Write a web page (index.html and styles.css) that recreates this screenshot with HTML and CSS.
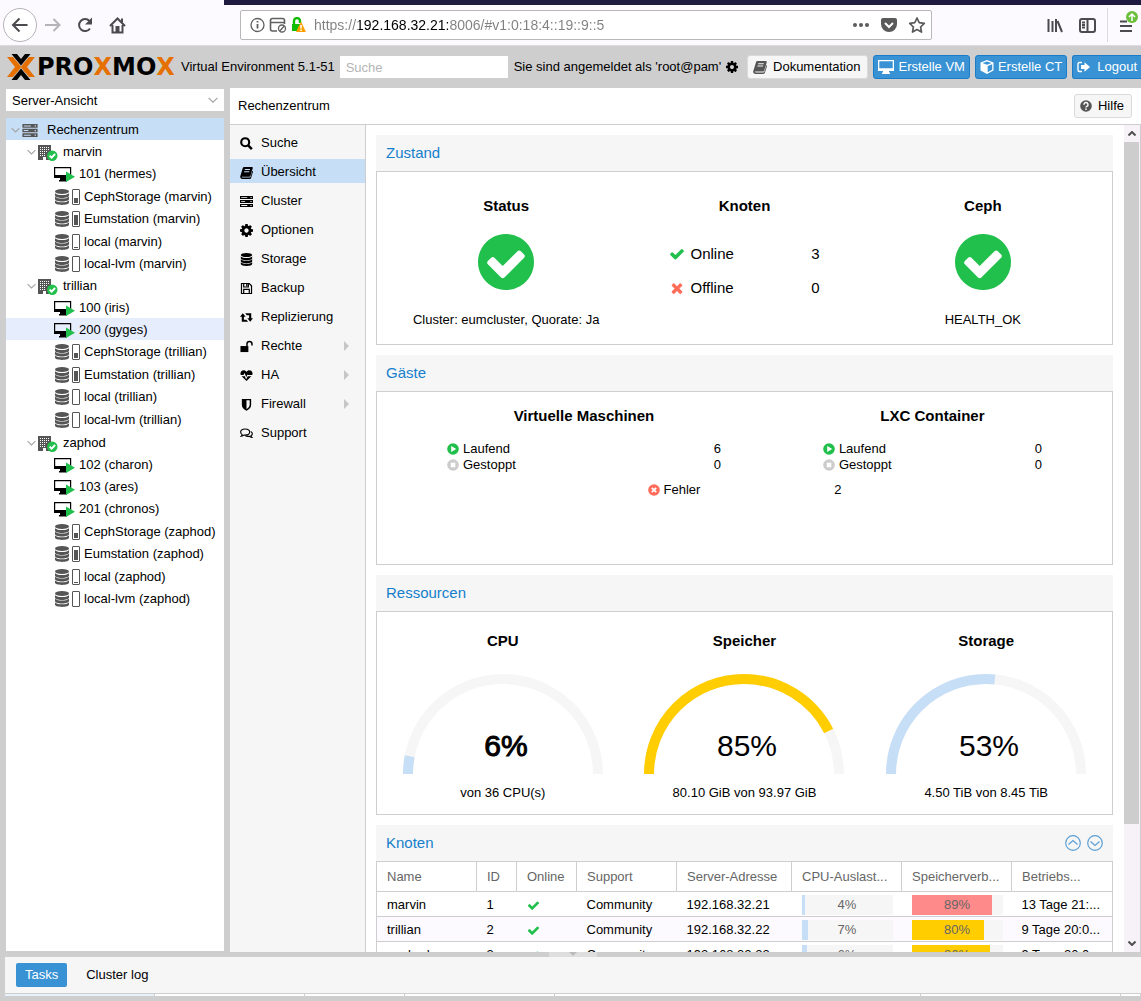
FILE: index.html
```html
<!DOCTYPE html>
<html lang="de">
<head>
<meta charset="UTF-8" />
<meta name="viewport" content="width=device-width, initial-scale=1" />
<title>Proxmox Virtual Environment</title>
<link rel="stylesheet" href="styles.css">
</head>
<body>

<!-- shared icons -->
<svg class="sprite" aria-hidden="true">
  <symbol id="i-check-circle" viewBox="128 128 1536 1536"><path d="M1412 734q0-28-18-46l-91-90q-19-19-45-19t-45 19l-408 407-226-226q-19-19-45-19t-45 19l-91 90q-18 18-18 46 0 27 18 45l362 362q19 19 45 19 27 0 46-19l543-543q18-18 18-45zm252 162q0 209-103 385.5t-279.5 279.5-385.5 103-385.5-103-279.5-279.5-103-385.5 103-385.5 279.5-279.5 385.5-103 385.5 103 279.5 279.5 103 385.5z"/></symbol>
  <symbol id="i-check" viewBox="0 0 1792 1792"><path d="M1671 566q0 40-28 68l-724 724-136 136q-28 28-68 28t-68-28l-136-136-362-362q-28-28-28-68t28-68l136-136q28-28 68-28t68 28l294 295 656-657q28-28 68-28t68 28l136 136q28 28 28 68z"/></symbol>
  <symbol id="i-times" viewBox="0 0 1792 1792"><path d="M1490 1322q0 40-28 68l-136 136q-28 28-68 28t-68-28l-294-294-294 294q-28 28-68 28t-68-28l-136-136q-28-28-28-68t28-68l294-294-294-294q-28-28-28-68t28-68l136-136q28-28 68-28t68 28l294 294 294-294q28-28 68-28t68 28l136 136q28 28 28 68t-28 68l-294 294 294 294q28 28 28 68z"/></symbol>
  <symbol id="i-cog" viewBox="128 128 1536 1536"><path d="M1152 896q0-106-75-181t-181-75-181 75-75 181 75 181 181 75 181-75 75-181zm512-109v222q0 12-8 23t-20 13l-185 28q-19 54-39 91 35 50 107 138 10 12 10 25t-9 23q-27 37-99 108t-94 71q-12 0-26-9l-138-108q-44 23-91 38-16 136-29 186-7 28-36 28h-222q-14 0-24.5-8.5t-11.5-21.5l-28-184q-49-16-90-37l-141 107q-10 9-25 9-14 0-25-11-126-114-165-168-7-10-7-23 0-12 8-23 15-21 51-66.5t54-70.5q-27-50-41-99l-183-27q-13-2-21-12.5t-8-23.5v-222q0-12 8-23t19-13l186-28q14-46 39-92-40-57-107-138-10-12-10-24 0-10 9-23 26-36 98.5-107.5t94.5-71.5q13 0 26 10l138 107q44-23 91-38 16-136 29-186 7-28 36-28h222q14 0 24.5 8.5t11.5 21.5l28 184q49 16 90 37l142-107q9-9 24-9 13 0 25 10 129 119 165 170 7 8 7 22 0 12-8 23-15 21-51 66.5t-54 70.5q26 50 41 98l183 28q13 2 21 12.5t8 23.5z"/></symbol>
  <symbol id="i-book" viewBox="0 0 14 14"><path fill-rule="evenodd" d="M4.6 1h8c.9 0 1.4.7 1.1 1.5l-2.4 7.9c-.2.7-.8 1.1-1.5 1.1H2.6c-.4 0-.6.2-.5.5s.4.5.8.5h7.5c.5 0 .8-.3 1-.8l2-6.6c.6.3.7.8.5 1.4l-2 6.3c-.2.7-.8 1.2-1.5 1.2H2.5C1 14-.2 12.500.3 11L3 2.200C3.200 1.500 3.900 1 4.600 1zM5.300 3.300l-.3 1h5.600l.3-1zM4.600 5.600l-.3 1h5.600l.3-1z"/></symbol>
  <symbol id="i-server" viewBox="0 0 14 12"><path fill-rule="evenodd" d="M0 0h14v3.400H0zM0 4.300h14v3.400H0zM0 8.600h14V12H0zM1.300 1.300v.9h6.500v-.9zM1.300 5.600v.9h4.200v-.9zM1.300 9.900v.9h6.500v-.9zM11.300 1.200v1.100h1.200V1.200zM11.300 5.500v1.100h1.200V5.500zM11.300 9.800v1.100h1.200V9.800z"/></symbol>
  <symbol id="i-db" viewBox="0 0 14 16"><ellipse cx="7" cy="2.500" rx="7" ry="2.500"/><path d="M0 4.200c1.500 1.300 4 1.800 7 1.800s5.500-.5 7-1.800V6.400C14 7.800 11 8.900 7 8.900S0 7.800 0 6.400zM0 7.800c1.500 1.300 4 1.800 7 1.800s5.500-.5 7-1.800V10c0 1.400-3 2.500-7 2.500S0 11.400 0 10zM0 11.400c1.500 1.300 4 1.800 7 1.800s5.500-.5 7-1.800v2.200C14 15 11 16 7 16s-7-1-7-2.400z"/></symbol>
  <symbol id="i-node" viewBox="0 0 20 17"><path fill="#555" d="M0 1h13v15H0z"/><g fill="#fff"><path d="M2 3h1v1H2zM4 3h1v1H4zM6 3h1v1H6zM8 3h1v1H8zM10 3h1v1h-1zM2 5h1v1H2zM4 5h1v1H4zM6 5h1v1H6zM8 5h1v1H8zM10 5h1v1h-1zM2 7h1v1H2zM4 7h1v1H4zM6 7h1v1H6zM8 7h1v1H8zM2 9h1v1H2zM4 9h1v1H4zM6 9h1v1H6zM2 11h1v1H2zM4 11h1v1H4zM6 11h1v1H6zM5 13h3v3H5z"/></g><circle cx="14.300" cy="11.700" r="5.200" fill="#21bf4b"/><path d="M11.600 11.700l2 2 3.500-3.700" fill="none" stroke="#fff" stroke-width="1.900"/></symbol>
  <symbol id="i-vm" viewBox="0 0 21 16"><path fill="none" stroke="#000" stroke-width="1.200" d="M.6 1.600h16v9H.6z"/><path d="M0 9h17v3H0zM6 12h6v2.500H6zM5 14h8v1.500H5z"/><path fill="#21bf4b" d="M12 5.500l9 5.200-9 5.300z"/></symbol>
  <symbol id="i-down" viewBox="0 0 10 6"><path fill="none" stroke="#a5a5a5" stroke-width="1.200" d="M.6.8L5 5.200 9.400.8"/></symbol>
  <symbol id="i-search" viewBox="0 0 14 14"><circle cx="5.600" cy="5.600" r="4.300" fill="none" stroke="#000" stroke-width="2.300"/><path d="M8.500 8.700l4.300 4.300" stroke="#000" stroke-width="2.700"/></symbol>
  <symbol id="i-save" viewBox="0 0 14 14"><path fill="none" stroke="#000" stroke-width="1.300" d="M1.600 1.600h8.400l2.400 2.400v8.400H1.600zM4 12V8h6v4M4 2v3.400h5V2M7.300 2v2.500"/></symbol>
  <symbol id="i-retweet" viewBox="0 0 14 14"><path d="M3 2.500L0 6.300h1.900V11.500h6.800L6.900 9.500H4.200V6.300h1.900zM5.500 2.500l1.800 2h2.500v3.200H7.900L11 11.500l3-3.800h-1.900V2.500z"/></symbol>
  <symbol id="i-unlock" viewBox="0 0 14 14"><path d="M.5 6.500H9V13H.5z"/><path fill="none" stroke="#000" stroke-width="1.600" d="M7.500 7V4.300a2.700 2.700 0 0 1 5.400 0V6"/></symbol>
  <symbol id="i-heart" viewBox="0 0 14 14"><path d="M7 3C5.800 1 3.500.8 1.900 2 .6 3.100.1 5 .8 6.500h3L5 4.300l1.700 4.600 1.300-3 .5.600h4.700c.7-1.500.2-3.400-1.100-4.500C10.500.8 8.200 1 7 3zM1.700 7.700L7 13l5.300-5.300H8.300l-1.700 3.600L4.900 7.200l-.4.500z"/></symbol>
  <symbol id="i-shield" viewBox="0 0 14 14"><path fill-rule="evenodd" d="M2 1h10v6.500c0 3-2.500 5-5 6.200C4.500 12.500 2 10.500 2 7.500zM7 2.500v9.400c1.800-1 3.400-2.500 3.400-4.600V2.500z"/></symbol>
  <symbol id="i-comments" viewBox="0 0 14 14"><path fill="none" stroke="#000" stroke-width="1.200" d="M5.600 2.200c2.700 0 4.800 1.400 4.800 3.300s-2.100 3.300-4.800 3.300c-.5 0-1 0-1.500-.1-.8.7-1.600 1-2.700 1.200.5-.5.800-1 .9-1.700C1.300 7.600.7 6.600.7 5.500c0-1.900 2.200-3.300 4.900-3.300zM11.500 4.800c1.100.6 1.800 1.400 1.800 2.400 0 .9-.6 1.700-1.500 2.300.1.700.5 1.200 1 1.700-1.200-.1-2.100-.5-2.900-1.200-1.500.3-3 .1-4-.5"/></symbol>
  <symbol id="i-play" viewBox="0 0 12 12"><circle cx="6" cy="6" r="5.800" fill="#21bf4b"/><path fill="#fff" d="M4.200 3l5 3-5 3z"/></symbol>
  <symbol id="i-stop" viewBox="0 0 12 12"><circle cx="6" cy="6" r="5.800" fill="#ccc"/><path fill="#fff" d="M3.700 3.700h4.600v4.600H3.700z"/></symbol>
  <symbol id="i-error" viewBox="0 0 12 12"><circle cx="6" cy="6" r="5.800" fill="#ff6c59"/><path stroke="#fff" stroke-width="1.800" d="M3.800 3.800l4.400 4.400M8.200 3.800L3.800 8.200"/></symbol>
</svg>

<div class="browser">
  <div class="nav">
    <button class="nav-btn back" aria-label="Zurück"><svg width="18" height="16" viewBox="0 0 18 16"><path d="M16.500 8H2M8.500 1.500L2 8l6.500 6.500"/></svg></button>
    <button class="nav-btn forward" aria-label="Vor"><svg width="16" height="14" viewBox="0 0 16 14"><path d="M0 7h14.500M8.500 1l6 6-6 6"/></svg></button>
    <button class="nav-btn" aria-label="Neu laden"><svg width="16" height="16" viewBox="0 0 16 16"><path d="M13 11.500A6 6 0 1 1 12.500 4"/><path class="solid" d="M15 .5v7H8z"/></svg></button>
    <button class="nav-btn" aria-label="Startseite"><svg width="17" height="17" viewBox="0 0 17 17"><path d="M1 9l7.500-7.500L16 9M3.500 8v7.500h10V8M13 1.500v4"/><path class="solid" d="M6.500 9h4v6.500h-4z"/></svg></button>
  </div>
  <div class="right">
    <div class="tabstrip"></div>
    <div class="url-row">
      <div class="urlbar">
        <svg width="56" height="16" viewBox="0 0 56 16"><g fill="none" stroke="#606060" stroke-width="1.300"><circle cx="7.500" cy="8" r="6.500"/><path d="M7.500 7v4.500M7.500 4v1.600" stroke-width="1.800"/><path d="M27 14h-4.500a2 2 0 0 1-2-2V3.500a2 2 0 0 1 2-2h10a2 2 0 0 1 2 2V7M20.500 5.500h14" stroke-width="1.600"/><circle cx="32" cy="11.500" r="3.500"/><path d="M29.700 14l4.600-5"/></g><path fill="none" stroke="#12bc00" stroke-width="2.400" d="M44 8V4a3 3 0 0 1 6 0v2"/><path fill="#12bc00" d="M42 7h8v7h-8z"/><path fill="#ffa000" d="M51 4.500l5 10.500H46z"/><path stroke="#fff" stroke-width="1.500" d="M51 8v3.500M51 12.500V14"/></svg>
        <input class="url" type="text" aria-label="Adresse" value="https://192.168.32.21:8006/#v1:0:18:4::19::9::5">
        <svg width="74" height="18" viewBox="0 0 74 18"><g fill="#5a5a5a"><circle cx="3" cy="9" r="2"/><circle cx="9" cy="9" r="2"/><circle cx="15" cy="9" r="2"/><path d="M31 2h12a2 2 0 0 1 2 2v4a8 8 0 0 1-16 0V4a2 2 0 0 1 2-2z"/></g><path fill="none" stroke="#fff" stroke-width="2" d="M33 7l4 4 4-4"/><path fill="none" stroke="#5a5a5a" stroke-width="1.700" stroke-linejoin="round" d="M65 2l2.200 4.700 5.100.7-3.700 3.600.9 5.100L65 13.600l-4.500 2.500.9-5.100-3.700-3.600 5.100-.7z"/></svg>
      </div>
      <div class="tools">
        <button class="nav-btn" aria-label="Bibliothek"><svg width="16" height="16" viewBox="0 0 16 16"><path d="M1.500 2v13M5.500 4v11M9 2v13M10.500 4l4.500 11"/></svg></button>
        <button class="nav-btn" aria-label="Seitenleiste"><svg width="17" height="15" viewBox="0 0 17 15"><path d="M3 1h11a2 2 0 0 1 2 2v9a2 2 0 0 1-2 2H3a2 2 0 0 1-2-2V3a2 2 0 0 1 2-2zM8.500 1v13" stroke-width="1.700"/><path d="M3 4.500h3M3 7h3M3 9.500h3" stroke-width="1"/></svg></button>
        <button class="nav-btn menu" aria-label="Menü"><svg width="18" height="24" viewBox="0 0 18 24"><path d="M0 11.500h7M0 16h12M0 21h12"/><circle cx="12" cy="7" r="6" fill="#6bbf3b" stroke="none"/><path d="M12 11V5M9 7l3-3 3 3" style="stroke:#fff;stroke-width:1.500"/></svg></button>
      </div>
    </div>
  </div>
</div>

<header class="header">
  <div class="logo">
    <svg width="28" height="26" viewBox="0 0 28 26"><path fill="#e57000" d="M0 3h6l8.500 10L6 23H0l8-10zM28 3h-6l-8.500 10L22 23h6l-8-10z"/><path d="M4.500 0H10l4 5 4-5h5.500L14 11.500zM4.500 26H10l4-5 4 5h5.500L14 14.500z"/></svg>
    <span>PRO<b>X</b>MO<b>X</b></span>
  </div>
  <span class="version">Virtual Environment 5.1-51</span>
  <input class="search" type="text" placeholder="Suche" aria-label="Suche">
  <span class="user">Sie sind angemeldet als 'root@pam'</span>
  <svg width="12" height="12"><use href="#i-cog"/></svg>
  <div class="actions">
    <button class="btn"><svg width="14" height="14"><use href="#i-book"/></svg>Dokumentation</button>
    <button class="btn blue"><svg width="16" height="14" viewBox="0 0 16 14"><path fill-rule="evenodd" d="M0 0h16v11H0zM1.300 1.300v6.900h13.400V1.300zM5 11h6v1.500h1V14H4v-1.500h1z"/></svg>Erstelle VM</button>
    <button class="btn blue"><svg width="14" height="14" viewBox="0 0 14 14"><path fill-rule="evenodd" d="M7 0l6.500 2.600v8L7 14 .5 10.600v-8zM7 1.400L2.500 3.100 7 4.800l4.500-1.700zM7.700 6v6.200l4.500-2.400V4.300z"/></svg>Erstelle CT</button>
    <button class="btn blue last"><svg width="14" height="14" viewBox="0 0 14 14"><path fill="none" stroke="#fff" stroke-width="1.400" d="M5 2.500H2.500a1.500 1.500 0 0 0-1.500 1.500v6a1.500 1.500 0 0 0 1.500 1.500H5"/><path d="M7.500 2.200L13 7l-5.500 4.800V9H4V5h3.500z"/></svg>Logout</button>
  </div>
</header>

<main class="main">
  <aside class="sidebar">
    <div class="view-select">
      <select aria-label="Ansicht"><option>Server-Ansicht</option></select>
      <svg width="10" height="6"><use href="#i-down"/></svg>
    </div>
    <div class="tree">
      <div class="row root"><svg class="exp"><use href="#i-down"/></svg><svg class="dc"><use href="#i-server"/></svg>Rechenzentrum</div>
      <div class="group">
        <div class="row node"><svg class="exp"><use href="#i-down"/></svg><svg class="host"><use href="#i-node"/></svg>marvin</div>
        <div class="row vm"><svg><use href="#i-vm"/></svg>101 (hermes)</div>
        <div class="row storage"><svg><use href="#i-db"/></svg><i class="usage"><i style="height:40%"></i></i>CephStorage (marvin)</div>
        <div class="row storage"><svg><use href="#i-db"/></svg><i class="usage"><i style="height:80%"></i></i>Eumstation (marvin)</div>
        <div class="row storage"><svg><use href="#i-db"/></svg><i class="usage"><i style="height:8%"></i></i>local (marvin)</div>
        <div class="row storage"><svg><use href="#i-db"/></svg><i class="usage"></i>local-lvm (marvin)</div>
      </div>
      <div class="group">
        <div class="row node"><svg class="exp"><use href="#i-down"/></svg><svg class="host"><use href="#i-node"/></svg>trillian</div>
        <div class="row vm"><svg><use href="#i-vm"/></svg>100 (iris)</div>
        <div class="row vm hover"><svg><use href="#i-vm"/></svg>200 (gyges)</div>
        <div class="row storage"><svg><use href="#i-db"/></svg><i class="usage"><i style="height:40%"></i></i>CephStorage (trillian)</div>
        <div class="row storage"><svg><use href="#i-db"/></svg><i class="usage"><i style="height:80%"></i></i>Eumstation (trillian)</div>
        <div class="row storage"><svg><use href="#i-db"/></svg><i class="usage"></i>local (trillian)</div>
        <div class="row storage"><svg><use href="#i-db"/></svg><i class="usage"></i>local-lvm (trillian)</div>
      </div>
      <div class="group">
        <div class="row node"><svg class="exp"><use href="#i-down"/></svg><svg class="host"><use href="#i-node"/></svg>zaphod</div>
        <div class="row vm"><svg><use href="#i-vm"/></svg>102 (charon)</div>
        <div class="row vm"><svg><use href="#i-vm"/></svg>103 (ares)</div>
        <div class="row vm"><svg><use href="#i-vm"/></svg>201 (chronos)</div>
        <div class="row storage"><svg><use href="#i-db"/></svg><i class="usage"><i style="height:40%"></i></i>CephStorage (zaphod)</div>
        <div class="row storage"><svg><use href="#i-db"/></svg><i class="usage"><i style="height:80%"></i></i>Eumstation (zaphod)</div>
        <div class="row storage"><svg><use href="#i-db"/></svg><i class="usage"><i style="height:8%"></i></i>local (zaphod)</div>
        <div class="row storage"><svg><use href="#i-db"/></svg><i class="usage"></i>local-lvm (zaphod)</div>
      </div>
    </div>
  </aside>

  <section class="workspace">
    <div class="title-bar">
      <span>Rechenzentrum</span>
      <button class="btn"><svg width="12" height="12" viewBox="0 0 12 12"><circle cx="6" cy="6" r="5.800"/><path fill="none" stroke="#fff" stroke-width="1.500" d="M4 4.700a2 2 0 1 1 2.800 1.700Q6 6.700 6 7.500M6 8.400v1.500"/></svg>Hilfe</button>
    </div>
    <div class="columns">
      <nav class="menu-list">
        <a href="#"><svg><use href="#i-search"/></svg>Suche</a>
        <a href="#" class="active"><svg><use href="#i-book"/></svg>Übersicht</a>
        <a href="#"><svg><use href="#i-server"/></svg>Cluster</a>
        <a href="#"><svg><use href="#i-cog"/></svg>Optionen</a>
        <a href="#"><svg><use href="#i-db"/></svg>Storage</a>
        <a href="#"><svg><use href="#i-save"/></svg>Backup</a>
        <a href="#"><svg><use href="#i-retweet"/></svg>Replizierung</a>
        <a href="#" class="more"><svg><use href="#i-unlock"/></svg>Rechte</a>
        <a href="#" class="more"><svg><use href="#i-heart"/></svg>HA</a>
        <a href="#" class="more"><svg><use href="#i-shield"/></svg>Firewall</a>
        <a href="#"><svg><use href="#i-comments"/></svg>Support</a>
      </nav>

      <div class="content">
        <section class="panel">
          <h2>Zustand</h2>
          <div class="panel-body health">
            <div class="health-col">
              <h3>Status</h3>
              <svg class="big-ok"><use href="#i-check-circle"/></svg>
              <p>Cluster: eumcluster, Quorate: Ja</p>
            </div>
            <div class="health-col">
              <h3>Knoten</h3>
              <div class="nodes-state">
                <div><svg class="ok"><use href="#i-check"/></svg>Online<span>3</span></div>
                <div><svg class="bad"><use href="#i-times"/></svg>Offline<span>0</span></div>
              </div>
            </div>
            <div class="health-col">
              <h3>Ceph</h3>
              <svg class="big-ok"><use href="#i-check-circle"/></svg>
              <p>HEALTH_OK</p>
            </div>
          </div>
        </section>

        <section class="panel">
          <h2>Gäste</h2>
          <div class="panel-body guests">
            <div class="guest-cols">
              <div>
                <h3>Virtuelle Maschinen</h3>
                <div class="count"><svg><use href="#i-play"/></svg>Laufend<span>6</span></div>
                <div class="count"><svg><use href="#i-stop"/></svg>Gestoppt<span>0</span></div>
              </div>
              <div>
                <h3>LXC Container</h3>
                <div class="count"><svg><use href="#i-play"/></svg>Laufend<span>0</span></div>
                <div class="count"><svg><use href="#i-stop"/></svg>Gestoppt<span>0</span></div>
              </div>
            </div>
            <div class="count errors"><svg><use href="#i-error"/></svg>Fehler<span>2</span></div>
          </div>
        </section>

        <section class="panel">
          <h2>Ressourcen</h2>
          <div class="panel-body resources">
            <div class="gauge">
              <h3>CPU</h3>
              <svg viewBox="0 0 200 100"><path class="track" d="M5 100a95 95 0 0 1 190 0"/><path class="value" pathLength="100" stroke-dasharray="6 200" d="M5 100a95 95 0 0 1 190 0"/><text class="heavy" x="103" y="82">6%</text></svg>
              <p>von 36 CPU(s)</p>
            </div>
            <div class="gauge">
              <h3>Speicher</h3>
              <svg viewBox="0 0 200 100"><path class="track" d="M5 100a95 95 0 0 1 190 0"/><path class="value warn" pathLength="100" stroke-dasharray="85 200" d="M5 100a95 95 0 0 1 190 0"/><text x="103" y="82">85%</text></svg>
              <p>80.10 GiB von 93.97 GiB</p>
            </div>
            <div class="gauge">
              <h3>Storage</h3>
              <svg viewBox="0 0 200 100"><path class="track" d="M5 100a95 95 0 0 1 190 0"/><path class="value" pathLength="100" stroke-dasharray="53 200" d="M5 100a95 95 0 0 1 190 0"/><text x="103" y="82">53%</text></svg>
              <p>4.50 TiB von 8.45 TiB</p>
            </div>
          </div>
        </section>

        <section class="panel">
          <h2>Knoten
            <span class="panel-tools">
              <button aria-label="Hoch"><svg viewBox="0 0 16 16"><circle cx="8" cy="8" r="7.300"/><path d="M3.500 9.500L8 5.500l4.500 4"/></svg></button>
              <button aria-label="Runter"><svg viewBox="0 0 16 16"><circle cx="8" cy="8" r="7.300"/><path d="M3.500 6.500l4.500 4 4.500-4"/></svg></button>
            </span>
          </h2>
          <table class="nodes">
            <colgroup><col class="w100"><col class="w40"><col class="w60"><col class="w100"><col class="w115"><col class="w110"><col class="w110"><col></colgroup>
            <thead>
              <tr><th>Name</th><th>ID</th><th>Online</th><th>Support</th><th>Server-Adresse</th><th>CPU-Auslast...</th><th>Speicherverb...</th><th>Betriebs...</th></tr>
            </thead>
            <tbody>
              <tr><td>marvin</td><td>1</td><td><svg class="ok"><use href="#i-check"/></svg></td><td>Community</td><td>192.168.32.21</td>
                <td><div class="bar"><i style="width:4%"></i><span>4%</span></div></td><td><div class="bar crit"><i style="width:89%"></i><span>89%</span></div></td><td>13 Tage 21:...</td></tr>
              <tr><td>trillian</td><td>2</td><td><svg class="ok"><use href="#i-check"/></svg></td><td>Community</td><td>192.168.32.22</td>
                <td><div class="bar"><i style="width:7%"></i><span>7%</span></div></td><td><div class="bar warn"><i style="width:80%"></i><span>80%</span></div></td><td>9 Tage 20:0...</td></tr>
              <tr><td>zaphod</td><td>3</td><td><svg class="ok"><use href="#i-check"/></svg></td><td>Community</td><td>192.168.32.23</td>
                <td><div class="bar"><i style="width:6%"></i><span>6%</span></div></td><td><div class="bar warn"><i style="width:86%"></i><span>86%</span></div></td><td>9 Tage 20:0...</td></tr>
            </tbody>
          </table>
        </section>
      </div>

      <div class="scrollbar">
        <svg width="8" height="5" viewBox="0 0 8 5"><path d="M.5 4.500L4 1l3.500 3.500"/></svg>
        <div class="track"><div class="thumb"></div></div>
        <svg width="8" height="5" viewBox="0 0 8 5"><path d="M.5.500L4 4 7.500.500"/></svg>
      </div>
    </div>
  </section>
</main>

<div class="splitter"><i><svg width="8" height="4" viewBox="0 0 8 4"><path fill="#bbb" d="M0 0h8L4 4z"/></svg></i></div>

<footer class="log">
  <div class="tabs">
    <button class="tab active">Tasks</button>
    <button class="tab">Cluster log</button>
  </div>
  <div class="log-head"><i class="sorted"></i><i></i><i></i><i></i><i></i><i></i><i></i></div>
</footer>

</body>
</html>
```

FILE: styles.css
```css
* {
  box-sizing: border-box;
}
body {
  margin: 0;
  height: 100vh;
  display: flex;
  flex-direction: column;
  overflow: hidden;
  background: #cecece;
  color: #000;
  font: 13px/16px "Liberation Sans", Arial, sans-serif;
}
button, input, select {
  font: inherit;
  color: inherit;
}
svg {
  flex: none;
}
h2, h3, p {
  margin: 0;
}
.sprite {
  position: absolute;
  width: 0;
  height: 0;
}

/* browser bar */
.browser {
  flex: none;
  display: flex;
  height: 46px;
  background: #fdfaff;
  border-bottom: 1px solid #dcdae0;
}
.nav {
  display: flex;
  align-items: center;
  gap: 16px;
  width: 224px;
  padding: 5px 0 0 3px;
}
.nav-btn {
  display: flex;
  padding: 0;
  border: 0;
  background: none;
}
.nav-btn path {
  fill: none;
  stroke: #4a4a4f;
  stroke-width: 2;
}
.nav-btn .solid {
  fill: #4a4a4f;
  stroke: none;
}
.nav .back {
  margin-right: -8px;
  width: 34px;
  height: 34px;
  align-items: center;
  justify-content: center;
  border: 1px solid #b5b3b8;
  border-radius: 50%;
  background: #fff;
}
.nav .forward path {
  stroke: #b5b3b8;
}
.right {
  flex: 1;
  display: flex;
  flex-direction: column;
}
.tabstrip {
  height: 5px;
  background: #1f1b40;
}
.url-row {
  flex: 1;
  display: flex;
  align-items: center;
  padding-left: 16px;
}
.urlbar {
  flex: 1;
  display: flex;
  align-items: center;
  height: 30px;
  padding: 0 5px 0 9px;
  background: #fff;
  border: 1px solid #b9b7bc;
  border-radius: 2px;
}
.url {
  flex: 1;
  min-width: 0;
  padding: 0 0 0 8px;
  border: 0;
  outline: 0;
  font-size: 14px;
  color: transparent;
  background: linear-gradient(90deg, #808080 53px, #000 53px 142px, #808080 142px);
  -webkit-background-clip: text;
  background-clip: text;
}
.tools {
  display: flex;
  align-items: center;
  align-self: stretch;
  gap: 16px;
  width: 209px;
  padding-left: 115px;
}
.tools .menu {
  align-items: center;
  height: 34px;
  margin-left: -5px;
  padding: 0 0 7px 12px;
  border-left: 1px solid #dcdae0;
}

/* header */
.header {
  flex: none;
  display: flex;
  align-items: center;
  height: 42px;
  padding-left: 7px;
  white-space: nowrap;
  overflow: hidden;
}
.logo {
  flex: none;
  display: flex;
  align-items: center;
  width: 174px;
  font: bold 24px/26px "DejaVu Sans", sans-serif;
}
.logo span {
  margin-left: 2px;
}
.logo b {
  color: #e57000;
}
.search {
  flex: none;
  width: 168px;
  height: 22px;
  margin: 0 6px 0 5px;
  padding: 0 6px;
  border: 0;
  background: #fff;
}
.search::placeholder {
  color: #b5b5b5;
}
.user {
  margin-right: 5px;
}
.actions {
  display: flex;
  gap: 5px;
  margin-left: auto;
}
.btn {
  display: flex;
  align-items: center;
  gap: 6px;
  height: 24px;
  padding: 0 7px 0 5px;
  border: 1px solid #dadada;
  border-radius: 3px;
  background: #f6f6f6;
}
.btn svg {
  fill: #555;
}
.btn.blue {
  padding: 0 4px;
  gap: 4px;
  border-color: #1a7cc9;
  background: #3892d4;
  color: #fff;
}
.btn.blue svg {
  fill: #fff;
}
.btn.last {
  gap: 6px;
  border-right: 0;
  border-radius: 3px 0 0 3px;
}

/* main area */
.main {
  flex: 1;
  min-height: 0;
  display: flex;
  gap: 6px;
  padding-left: 6px;
}
.sidebar {
  flex: none;
  display: flex;
  flex-direction: column;
  gap: 7px;
  width: 218px;
  padding: 1px 0;
}
.view-select {
  position: relative;
  height: 22px;
}
.view-select select {
  width: 100%;
  height: 100%;
  padding: 1px 6px 0;
  border: 0;
  background: #fff;
  appearance: none;
}
.view-select svg {
  position: absolute;
  right: 6px;
  top: 8px;
}
.tree {
  flex: 1;
  background: #fff;
  overflow: hidden;
}
.row {
  display: flex;
  align-items: center;
  height: 22px;
  padding-top: 2px;
  white-space: nowrap;
}
.row.storage:nth-child(odd) {
  height: 23px;
}
.group:last-child {
  margin-top: 1px;
}
.row.root {
  padding-left: 5px;
  background: #c6def6;
}
.row.node {
  padding-left: 21px;
}
.row.vm {
  padding-left: 48px;
}
.row.storage {
  padding-left: 49px;
}
.row.hover {
  background: #e6edfd;
}
.exp {
  width: 9px;
  height: 6px;
  margin-right: 2px;
}
.dc {
  width: 16px;
  height: 13px;
  margin-right: 9px;
  fill: #555;
}
.host {
  width: 20px;
  height: 17px;
  margin-right: 5px;
}
.vm svg {
  width: 21px;
  height: 16px;
  margin-right: 4px;
}
.storage svg {
  width: 14px;
  height: 16px;
  fill: #555;
}
.usage {
  display: flex;
  align-items: flex-end;
  width: 8px;
  height: 16px;
  margin: 0 4px 0 3px;
  padding: 1px;
  border: 1px solid #555;
  border-radius: 1px;
}
.usage i {
  width: 100%;
  background: #555;
}

.workspace {
  flex: 1;
  min-width: 0;
  display: flex;
  flex-direction: column;
  background: #fff;
}
.title-bar {
  display: flex;
  align-items: center;
  justify-content: space-between;
  height: 37px;
  padding: 0 9px 0 8px;
  border-bottom: 1px solid #cecece;
}
.columns {
  flex: 1;
  min-height: 0;
  display: flex;
}
.menu-list {
  flex: none;
  display: flex;
  flex-direction: column;
  gap: 5px;
  width: 136px;
  padding-top: 5px;
  background: #f6f6f6;
  border-right: 1px solid #cecece;
}
.menu-list a {
  display: flex;
  align-items: center;
  gap: 8px;
  height: 24px;
  padding: 2px 16px 0 10px;
  color: #000;
  text-decoration: none;
}
.menu-list svg {
  width: 13px;
  height: 13px;
}
.menu-list .active {
  background: #c6def6;
}
.menu-list .more::after {
  content: "";
  margin-left: auto;
  border: 5px solid transparent;
  border-left-color: #c6c6c6;
  border-right: 0;
}
.content {
  flex: 1;
  min-width: 0;
  padding: 10px 11px 10px 10px;
  overflow: hidden;
}

/* panels */
.panel {
  margin-bottom: 10px;
}
.panel h2 {
  display: flex;
  align-items: center;
  justify-content: space-between;
  height: 36px;
  padding: 0 10px;
  background: #f6f6f6;
  color: #157fcc;
  font-size: 15px;
  font-weight: normal;
}
.panel-body {
  border: 1px solid #cecece;
}
.panel h3 {
  font-size: 15px;
  line-height: 18px;
  text-align: center;
}
.ok {
  fill: #21bf4b;
}
.bad {
  fill: #ff6c59;
}
.health {
  display: grid;
  grid-template-columns: repeat(3, 1fr);
  height: 174px;
  padding: 25px 10px 0;
}
.health-col {
  display: flex;
  flex-direction: column;
  align-items: center;
}
.big-ok {
  width: 56px;
  height: 56px;
  margin: 19px 0 22px;
  fill: #21bf4b;
}
.nodes-state {
  width: 150px;
  margin-top: 22px;
  font-size: 15px;
}
.nodes-state div {
  display: flex;
  align-items: center;
  gap: 5px;
  height: 34px;
}
.nodes-state svg {
  width: 16px;
  height: 16px;
}
.nodes-state span, .count span {
  margin-left: auto;
}
.guests {
  height: 174px;
  padding: 15px 70px 0;
}
.guest-cols {
  display: grid;
  grid-template-columns: 5fr 4fr;
  gap: 102px;
}
.guests h3 {
  margin-bottom: 16px;
}
.count {
  display: flex;
  align-items: center;
  gap: 4px;
}
.count svg {
  width: 12px;
  height: 12px;
}
.errors {
  width: 194px;
  margin: 9px auto 0;
}
.resources {
  display: grid;
  grid-template-columns: repeat(3, 1fr);
  height: 204px;
  padding: 20px 5px 0;
}
.gauge {
  display: flex;
  flex-direction: column;
  align-items: center;
}
.gauge svg {
  width: 200px;
  height: 100px;
  margin: 24px 0 11px;
}
.gauge path {
  fill: none;
  stroke-width: 10;
}
.gauge .track {
  stroke: #f6f6f6;
}
.gauge .value {
  stroke: #c6def6;
}
.gauge .warn {
  stroke: #ffcd00;
}
.gauge text {
  font-size: 30px;
  text-anchor: middle;
}
.gauge .heavy {
  stroke: #000;
  stroke-width: 1px;
}
.panel-tools {
  display: flex;
  gap: 6px;
}
.panel-tools button {
  display: flex;
  padding: 0;
  border: 0;
  background: none;
}
.panel-tools svg {
  width: 16px;
  height: 16px;
  fill: none;
  stroke: #5b9fd6;
  stroke-width: 1.2;
}

/* node table */
.nodes {
  width: 100%;
  table-layout: fixed;
  border-collapse: collapse;
  border: 1px solid #cecece;
}
.w40 {
  width: 40px;
}
.w60 {
  width: 60px;
}
.w100 {
  width: 100px;
}
.w110 {
  width: 110px;
}
.w115 {
  width: 115px;
}
.nodes th, .nodes td {
  padding: 0 9px 0 10px;
  text-align: left;
  white-space: nowrap;
  overflow: hidden;
}
.nodes th {
  height: 30px;
  border: 1px solid #cecece;
  color: #666;
  font-weight: normal;
}
.nodes td {
  height: 25px;
  padding-top: 2px;
  border-bottom: 1px solid #cecece;
}
.nodes tr:nth-child(even) td {
  background: #fdfaff;
}
.nodes svg {
  display: block;
  width: 13px;
  height: 13px;
}
.bar {
  position: relative;
  height: 20px;
  background: #f6f6f6;
  color: #666;
  line-height: 20px;
  text-align: center;
}
.bar i {
  position: absolute;
  left: 0;
  top: 0;
  height: 100%;
  background: #c6def6;
}
.bar span {
  position: relative;
}
.bar.crit i {
  background: #ff8a8a;
}
.bar.warn i {
  background: #ffcd00;
}

.scrollbar {
  flex: none;
  display: flex;
  flex-direction: column;
  align-items: center;
  width: 17px;
  padding: 6px 0;
  background: #f7f2f7;
  border-right: 1px solid #cecece;
}
.scrollbar path {
  fill: none;
  stroke: #505050;
  stroke-width: 2;
}
.scrollbar .track {
  flex: 1;
  align-self: stretch;
  margin: 6px 0;
}
.scrollbar .thumb {
  width: 15px;
  height: 86%;
  background: #cdcdcd;
}

/* bottom log */
.splitter {
  flex: none;
  display: flex;
  justify-content: center;
  height: 5px;
  padding-left: 5px;
}
.splitter i {
  display: flex;
  justify-content: center;
  width: 48px;
  background: #dedede;
}
.log {
  flex: none;
  margin: 0 0 5px 5px;
  background: #f6f6f6;
}
.tabs {
  display: flex;
  gap: 10px;
  padding: 6px 11px;
}
.tab {
  height: 24px;
  padding: 0 9px;
  border: 0;
  border-radius: 2px;
  background: none;
}
.tab.active {
  background: #3892d4;
  color: #fff;
}
.log-head {
  display: grid;
  grid-template-columns: 150px 150px 100px 150px 1fr 200px 20px;
  height: 3px;
  border-top: 1px solid #cecece;
  background: #fff;
}
.log-head i {
  border-right: 1px solid #cecece;
}
.log-head .sorted {
  background: #e6f1fb;
}
```
